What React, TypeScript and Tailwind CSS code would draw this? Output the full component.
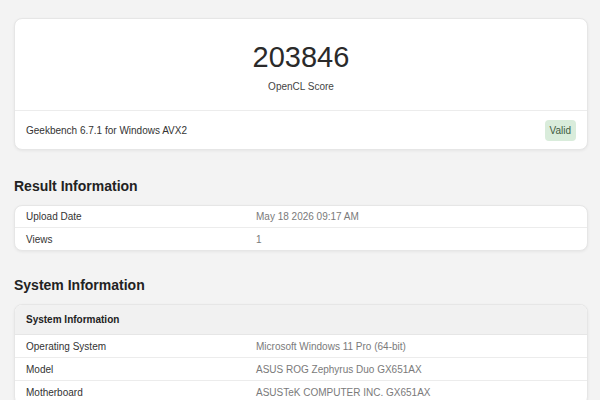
import React from 'react';

interface Row {
  label: string;
  value: string;
}

const resultRows: Row[] = [
  { label: 'Upload Date', value: 'May 18 2026 09:17 AM' },
  { label: 'Views', value: '1' },
];

const systemRows: Row[] = [
  { label: 'Operating System', value: 'Microsoft Windows 11 Pro (64-bit)' },
  { label: 'Model', value: 'ASUS ROG Zephyrus Duo GX651AX' },
  { label: 'Motherboard', value: 'ASUSTeK COMPUTER INC. GX651AX' },
];

function InfoRows({ rows, tall }: { rows: Row[]; tall?: boolean }) {
  return (
    <div className="divide-y divide-[#ececec]">
      {rows.map((row) => (
        <div
          key={row.label}
          className={`grid grid-cols-[230px_1fr] items-center px-[11px] text-[10px] ${tall ? 'h-[23px]' : 'h-[22px]'}`}
        >
          <div className="text-[#333]">{row.label}</div>
          <div className="text-[#7a7a7a]">{row.value}</div>
        </div>
      ))}
    </div>
  );
}

export default function App() {
  return (
    <div className="w-[600px] h-[400px] overflow-hidden bg-[#f3f3f3] pl-[14px] pr-[12px] pt-[18px] font-['Liberation_Sans',Arial,sans-serif]">
      <div className="bg-white rounded-lg border border-[#e6e6e6] shadow-[0_1px_3px_rgba(0,0,0,0.06)]">
        <div className="flex flex-col items-center pt-[19px] pb-[16px]">
          <div className="text-[29px] leading-[38px] text-[#2a2a2a]">203846</div>
          <div className="text-[10px] leading-[14px] text-[#444] mt-[4px]">OpenCL Score</div>
        </div>
        <div className="flex items-center justify-between border-t border-[#ececec] h-[39px] px-[11px]">
          <div className="text-[10px] text-[#333]">Geekbench 6.7.1 for Windows AVX2</div>
          <span className="bg-[#d9ecdb] text-[#3d5a41] text-[10px] rounded px-[5px] py-[3px]">Valid</span>
        </div>
      </div>

      <h2 className="text-[14px] font-bold text-[#222] mt-[27px] mb-[10px] leading-[18px]">Result Information</h2>
      <div className="bg-white rounded-lg border border-[#e6e6e6] shadow-[0_1px_3px_rgba(0,0,0,0.06)]">
        <InfoRows rows={resultRows} />
      </div>

      <h2 className="text-[14px] font-bold text-[#222] mt-[25px] mb-[10px] leading-[18px]">System Information</h2>
      <div className="bg-white rounded-lg border border-[#e6e6e6] shadow-[0_1px_3px_rgba(0,0,0,0.06)] overflow-hidden">
        <div className="bg-[#f1f1f1] h-[30px] flex items-center px-[11px] text-[10px] font-bold text-[#222] border-b border-[#e6e6e6]">
          System Information
        </div>
        <InfoRows rows={systemRows} tall />
      </div>
    </div>
  );
}
